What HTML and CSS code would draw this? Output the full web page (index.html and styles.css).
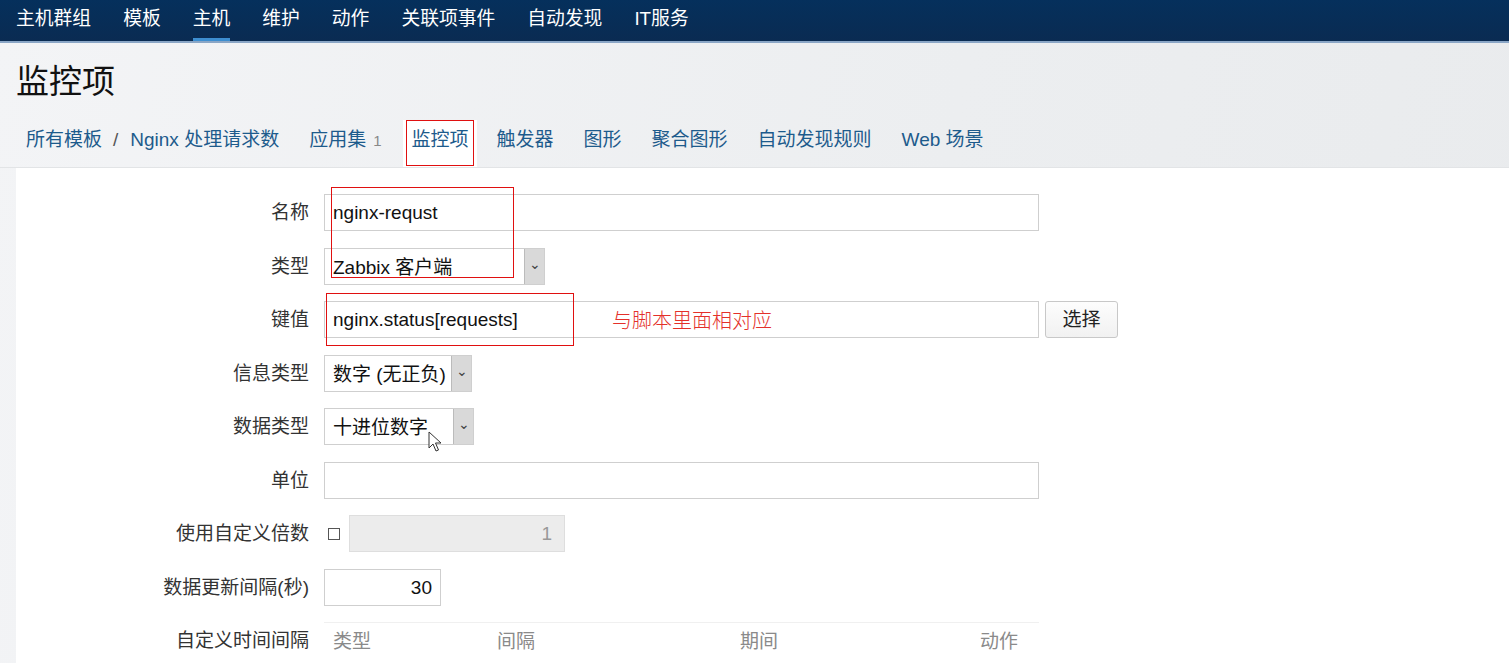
FILE: index.html
```html
<!DOCTYPE html>
<html>
<head>
    <title>监控项</title>
    <link rel="stylesheet" href="styles.css">
</head>
<body>
    <div class="topnav">
        <div class="nav-item">主机群组</div>
        <div class="nav-item">模板</div>
        <div class="nav-item active">主机</div>
        <div class="nav-item">维护</div>
        <div class="nav-item">动作</div>
        <div class="nav-item">关联项事件</div>
        <div class="nav-item">自动发现</div>
        <div class="nav-item">IT服务</div>
    </div>

    <div class="header">
        <h1 class="title">监控项</h1>
        <div class="tabs">
            <div class="tab crumbs">所有模板<span class="sep">/</span>Nginx 处理请求数</div>
            <div class="tab">应用集<span class="count">1</span></div>
            <div class="tab current">监控项</div>
            <div class="tab">触发器</div>
            <div class="tab">图形</div>
            <div class="tab">聚合图形</div>
            <div class="tab">自动发现规则</div>
            <div class="tab">Web 场景</div>
        </div>
    </div>

    <div class="panel">
        <div class="form">
            <div class="label">名称</div>
            <div class="field"><div class="input wide">nginx-requst</div></div>

            <div class="label">类型</div>
            <div class="field">
                <div class="select type-select"><span class="val">Zabbix 客户端</span><span class="arrow">⌄</span></div>
            </div>

            <div class="label">键值</div>
            <div class="field">
                <div class="input wide">nginx.status[requests]</div>
                <div class="btn">选择</div>
            </div>

            <div class="label">信息类型</div>
            <div class="field">
                <div class="select info-select"><span class="val">数字 (无正负)</span><span class="arrow">⌄</span></div>
            </div>

            <div class="label">数据类型</div>
            <div class="field">
                <div class="select data-select"><span class="val">十进位数字</span><span class="arrow">⌄</span></div>
            </div>

            <div class="label">单位</div>
            <div class="field"><div class="input wide"></div></div>

            <div class="label">使用自定义倍数</div>
            <div class="field">
                <span class="checkbox"></span>
                <div class="input multiplier">1</div>
            </div>

            <div class="label">数据更新间隔(秒)</div>
            <div class="field"><div class="input interval">30</div></div>

            <div class="label">自定义时间间隔</div>
            <div class="field">
                <div class="intervals">
                    <span class="col-type">类型</span>
                    <span class="col-int">间隔</span>
                    <span class="col-period">期间</span>
                    <span class="col-act">动作</span>
                </div>
            </div>
        </div>
    </div>

    <!-- annotations drawn over the screenshot -->
    <div class="mark mark-tab"></div>
    <div class="mark mark-name"></div>
    <div class="mark mark-key"></div>
    <div class="note">与脚本里面相对应</div>
    <svg class="cursor" width="16" height="22" viewBox="0 0 16 22">
        <path d="M1 1 L1 17 L5 13 L8 20 L10.5 19 L7.5 12 L13 12 Z" fill="#fff" stroke="#333" stroke-width="1"/>
    </svg>
</body>
</html>
```

FILE: styles.css
```css
body {
    margin: 0;
    font-family: "Liberation Sans", "Noto Sans CJK SC", sans-serif;
    font-size: 19px;
    color: #222;
    background: linear-gradient(100deg, #f3f4f6 0%, #eceef0 60%, #e9ebed 100%);
    position: relative;
    height: 663px;
    overflow: hidden;
}
.topnav {
    height: 41px;
    background: linear-gradient(#05305c, #0a2b52);
    border-bottom: 2px solid #8aa6c6;
    display: flex;
    align-items: stretch;
    padding-left: 16px;
    gap: 32px;
}
.nav-item {
    color: #fff;
    line-height: 38px;
    border-bottom: 3px solid transparent;
    font-size: 18.8px;
}
.nav-item.active {
    border-bottom-color: #3d8ed0;
}
.header {
    height: 124px;
    border-bottom: 1px solid #e2e4e6;
}
.title {
    margin: 0;
    padding: 16px 0 0 16px;
    height: 40px;
    font-size: 33px;
    font-weight: normal;
    line-height: 40px;
    color: #111;
    font-family: "Noto Sans CJK SC", sans-serif;
}
.tabs {
    display: flex;
    margin-top: 21px;
    padding-left: 19px;
    height: 47px;
    gap: 16px;
}
.tab {
    padding: 0 7px;
    line-height: 40px;
    color: #1d5b8c;
}
.tab .sep {
    color: #555;
    margin: 0 12px 0 11px;
}
.tab .count {
    color: #888;
    font-size: 15px;
    margin-left: 7px;
}
.tab.current {
    background: #fff;
    margin: 0 -3px 0 -2px;
    padding: 0 8px 0 9px;
}
.panel {
    background: #fff;
    margin-left: 16px;
    height: 500px;
}
.form {
    display: grid;
    grid-template-columns: 293px 1fr;
    column-gap: 15px;
    row-gap: 16.5px;
    padding-top: 26px;
}
.label {
    text-align: right;
    line-height: 37px;
    color: #333;
}
.field {
    display: flex;
    align-items: center;
    gap: 6px;
    height: 37px;
}
.input {
    box-sizing: border-box;
    height: 37px;
    border: 1px solid #cfcfcf;
    padding: 0 8px;
    line-height: 35px;
    color: #111;
    background: #fff;
}
.input.wide {
    width: 715px;
}
.input.multiplier {
    width: 216px;
    margin-left: 3px;
    background: #ececec;
    border-color: #dedede;
    color: #999;
    text-align: right;
    padding-right: 12px;
}
.input.interval {
    width: 117px;
    text-align: right;
    padding-right: 8px;
}
.select {
    box-sizing: border-box;
    height: 37px;
    border: 1px solid #cfcfcf;
    display: flex;
    background: #fff;
}
.select .val {
    flex: 1;
    padding-left: 8px;
    line-height: 37px;
    color: #111;
    white-space: nowrap;
}
.select .arrow {
    width: 19px;
    background: #d9d9d9;
    border-left: 1px solid #bbb;
    color: #444;
    font-size: 14px;
    text-align: center;
    line-height: 30px;
}
.type-select { width: 221px; }
.info-select { width: 148px; }
.data-select { width: 150px; }
.btn {
    box-sizing: border-box;
    width: 73px;
    height: 37px;
    border: 1px solid #c8c8c8;
    border-radius: 3px;
    background: linear-gradient(#fdfdfd, #f1f1f1);
    text-align: center;
    line-height: 35px;
    color: #222;
}
.checkbox {
    width: 10px;
    height: 10px;
    border: 1px solid #555;
    margin-left: 4px;
}
.intervals {
    box-sizing: border-box;
    width: 715px;
    height: 37px;
    border-top: 1px solid #f0f0f0;
    position: relative;
    color: #8a8a8a;
    line-height: 37px;
    display: flex;
    padding-left: 9px;
}
.col-type { width: 164px; }
.col-int { width: 243px; }
.col-period { width: 240px; }
.mark {
    position: absolute;
    border: 1px solid #e01010;
}
.mark-tab {
    left: 406px;
    top: 120px;
    width: 66px;
    height: 44px;
}
.mark-name {
    left: 331px;
    top: 187px;
    width: 181px;
    height: 89px;
}
.mark-key {
    left: 326px;
    top: 293px;
    width: 246px;
    height: 51px;
}
.note {
    position: absolute;
    left: 612px;
    top: 306px;
    font-family: "Noto Sans CJK SC", sans-serif;
    font-weight: 300;
    font-size: 20px;
    line-height: 28px;
    color: #e4302a;
}
.cursor {
    position: absolute;
    left: 428px;
    top: 431px;
}
```
